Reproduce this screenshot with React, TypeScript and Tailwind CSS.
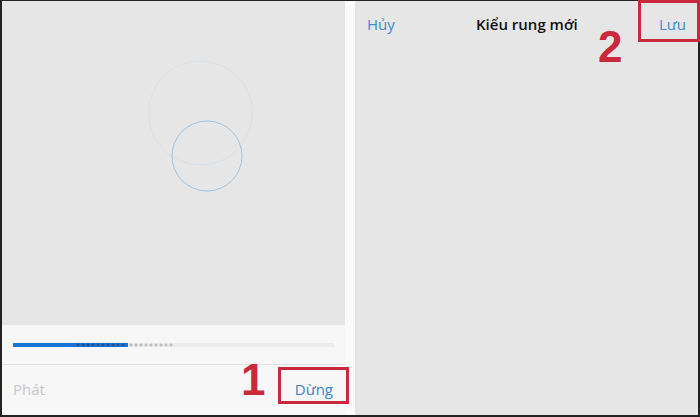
import React from 'react';

const font = { fontFamily: '"Open Sans", "Noto Sans", Arial, sans-serif' };

function Circles() {
  return (
    <svg width="343" height="324" className="block">
      <circle cx="198.5" cy="112" r="52" fill="none" stroke="#d9e1e8" strokeWidth="1" />
      <circle cx="205" cy="155" r="35" fill="none" stroke="#9fc4e4" strokeWidth="1" />
    </svg>
  );
}

function Progress() {
  const dark = Array.from({ length: 10 }, (_, i) => 78 + i * 5);
  const light = Array.from({ length: 9 }, (_, i) => 131 + i * 5);
  return (
    <svg width="343" height="6" className="block">
      <rect x="11" y="1" width="321" height="4" fill="#ececec" />
      <rect x="11" y="1" width="115" height="4" fill="#1b72d6" />
      {dark.map((x) => (
        <circle key={x} cx={x - 2} cy="3" r="1.4" fill="#27508a" />
      ))}
      {light.map((x) => (
        <circle key={x} cx={x - 2} cy="3" r="1.5" fill="#bdbdbd" />
      ))}
    </svg>
  );
}

export default function App() {
  return (
    <div className="w-[700px] h-[417px] bg-[#222] pt-px pb-[2px] px-[2px] overflow-hidden" style={font}>
      <div className="flex h-full">
        {/* left screen */}
        <div className="w-[343px] flex flex-col relative">
          <div className="h-[324px] bg-[#e6e6e6]">
            <Circles />
          </div>
          <div className="flex-1 bg-[#f7f7f7] flex flex-col">
            <div className="pt-[17px] h-[39px]">
              <Progress />
            </div>
            <div className="h-px bg-[#e2e2e2]" />
            <div className="flex-1 flex items-center justify-between pl-[11px] pr-[12px] pb-[2px]">
              <span className="text-[15px] text-[#c7c7c7]">Phát</span>
              <span className="text-[15px] text-[#3a84c8]">Dừng</span>
            </div>
          </div>
          <div className="absolute left-[276px] top-[366px] w-[71px] h-[37px] border-[3px] border-[#c9283d]" />
          <div className="absolute left-[239px] top-[357px] text-[44px] leading-none font-bold text-[#c9283d] font-['Liberation_Sans',Arial,sans-serif]">1</div>
        </div>

        {/* gap */}
        <div className="w-[10px] bg-[#fafafa]" />

        {/* right screen */}
        <div className="flex-1 bg-[#e6e6e6] relative">
          <div className="h-[46px] flex items-center justify-between pl-[12px] pr-[12px]">
            <span className="text-[15px] text-[#3f8ad0]">Hủy</span>
            <span className="text-[15px] font-semibold text-[#111]">Kiểu rung mới</span>
            <span className="text-[15px] text-[#3f8ad0]">Lưu</span>
          </div>
          <div className="absolute left-[283px] -top-px w-[62px] h-[42px] border-[3px] border-[#c9283d]" />
          <div className="absolute left-[243px] top-[24px] text-[44px] leading-none font-bold text-[#c9283d] font-['Liberation_Sans',Arial,sans-serif]">2</div>
        </div>
      </div>
    </div>
  );
}
